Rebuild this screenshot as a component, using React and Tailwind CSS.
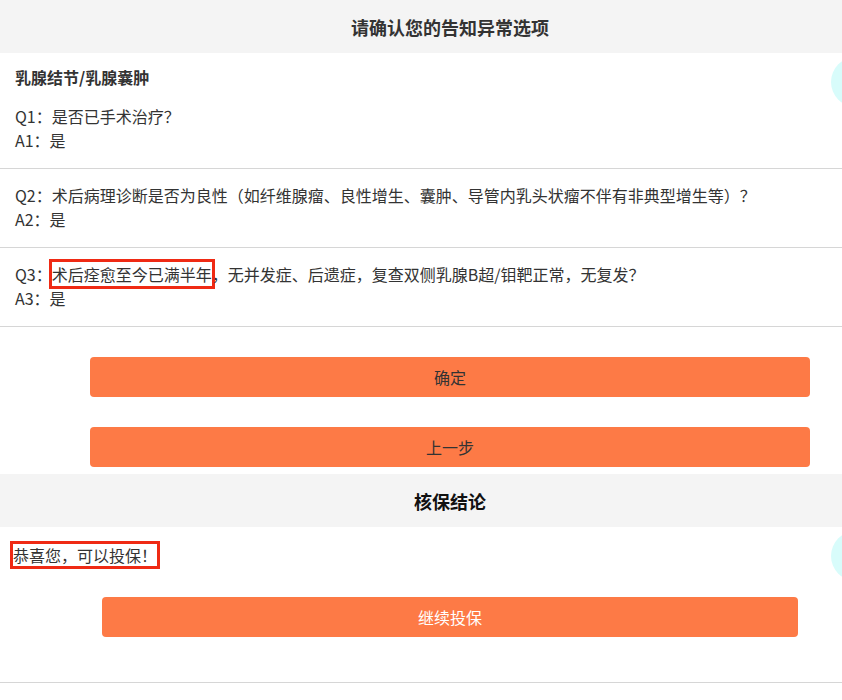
const QUESTIONS = [
  { q: 'Q1：是否已手术治疗？', a: 'A1：是' },
  {
    q: 'Q2：术后病理诊断是否为良性（如纤维腺瘤、良性增生、囊肿、导管内乳头状瘤不伴有非典型增生等）？',
    a: 'A2：是',
  },
  { q: null, a: 'A3：是' },
];

const Bubble = () => (
  <div className="absolute top-[4px] left-[831px] w-[50px] h-[50px] rounded-full bg-[#d8fcfb]" />
);

const SectionHeader = ({ title, dark }) => (
  <div
    className={`h-[53px] bg-[#f4f4f4] flex items-center justify-center text-[18px] font-bold ${
      dark ? 'text-[#111]' : 'text-[#333]'
    }`}
  >
    {title}
  </div>
);

export default function App() {
  return (
    <div className="w-full overflow-hidden bg-white font-['Noto_Sans_CJK_SC',sans-serif] text-[16px] leading-[24px] text-[#333]">
      <div className="w-[900px]">
        <SectionHeader title="请确认您的告知异常选项" />

        {/* Abnormal items */}
        <div className="relative">
          <Bubble />
          <div className="px-[15px] pt-[12px] text-[16px] font-bold text-[#333]">乳腺结节/乳腺囊肿</div>
          {QUESTIONS.map((item, idx) => (
            <div
              key={idx}
              className={`px-[15px] pb-[16px] border-b border-[#d6d6d6] ${idx === 0 ? 'pt-[15px]' : 'pt-[14px]'}`}
            >
              <div>
                {item.q ?? (
                  <>
                    Q3：
                    <span className="inline-block outline-3 outline-solid outline-[#ef2a14]">
                      术后痊愈至今已满半年
                    </span>
                    ，无并发症、后遗症，复查双侧乳腺B超/钼靶正常，无复发？
                  </>
                )}
              </div>
              <div>{item.a}</div>
            </div>
          ))}
        </div>

        {/* Action buttons */}
        <div className="px-[90px] pt-[30px] pb-[7px] flex flex-col gap-[30px]">
          <button className="h-[40px] rounded-[4px] bg-[#fd7a46] text-[#333] text-[16px]">确定</button>
          <button className="h-[40px] rounded-[4px] bg-[#fd7a46] text-[#333] text-[16px]">上一步</button>
        </div>

        <SectionHeader title="核保结论" dark />

        {/* Conclusion */}
        <div className="relative border-b border-[#d6d6d6] pt-[16px] pb-[45px]">
          <Bubble />
          <div className="pl-[13px]">
            <span className="inline-block leading-[22px] outline-3 outline-solid outline-[#ef2a14]">
              恭喜您，可以投保！
            </span>
          </div>
          <div className="px-[102px] pt-[30px]">
            <button className="w-full h-[40px] rounded-[4px] bg-[#fd7a46] text-white text-[16px]">继续投保</button>
          </div>
        </div>
      </div>
    </div>
  );
}
